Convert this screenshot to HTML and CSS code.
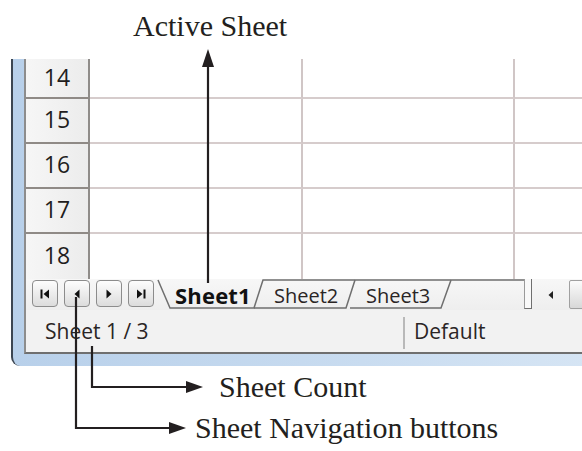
FILE: index.html
```html
<html>
<head>
    <title>Sheet tabs</title>
    <link rel="stylesheet" href="styles.css">
</head>
<body>
    <div class="title">Active Sheet</div>

    <div class="window">
        <div class="inner">
            <div class="grid">
                <div class="row first"><div class="rh">14</div><div class="c c1"></div><div class="c c2"></div><div class="c c3"></div></div>
                <div class="row"><div class="rh">15</div><div class="c c1"></div><div class="c c2"></div><div class="c c3"></div></div>
                <div class="row"><div class="rh">16</div><div class="c c1"></div><div class="c c2"></div><div class="c c3"></div></div>
                <div class="row"><div class="rh">17</div><div class="c c1"></div><div class="c c2"></div><div class="c c3"></div></div>
                <div class="row last"><div class="rh">18</div><div class="c c1"></div><div class="c c2"></div><div class="c c3"></div></div>
            </div>

            <div class="tabbar">
                <div class="nav">
                    <span class="btn"><svg width="12" height="12" viewBox="0 0 12 12"><rect x="1.5" y="1.5" width="2" height="9" fill="#111"/><path d="M10 1.5 L4.5 6 L10 10.5 Z" fill="#111"/></svg></span>
                    <span class="btn"><svg width="12" height="12" viewBox="0 0 12 12"><path d="M8.5 1.5 L3.5 6 L8.5 10.5 Z" fill="#111"/></svg></span>
                    <span class="btn"><svg width="12" height="12" viewBox="0 0 12 12"><path d="M3.5 1.5 L8.5 6 L3.5 10.5 Z" fill="#111"/></svg></span>
                    <span class="btn"><svg width="12" height="12" viewBox="0 0 12 12"><path d="M2 1.5 L7.5 6 L2 10.5 Z" fill="#111"/><rect x="8.5" y="1.5" width="2" height="9" fill="#111"/></svg></span>
                </div>
                <div class="tabs">
                    <svg class="tab-lines" width="370" height="31" viewBox="0 0 370 31">
                        <g fill="none" stroke="#6f6f6f" stroke-width="1.5">
                            <path d="M4 1 L16 29 L100 29 L109 1 L370 1"/>
                            <path d="M100 29 L192 29 L201 1"/>
                            <path d="M196 29 L287 29 L297 1"/>
                        </g>
                    </svg>
                    <span class="tab active">Sheet1</span>
                    <span class="tab t2">Sheet2</span>
                    <span class="tab t3">Sheet3</span>
                </div>
                <span class="split"></span>
                <span class="scroll-left"><svg width="8" height="10" viewBox="0 0 8 10"><path d="M6 1 L1.5 5 L6 9 Z" fill="#222"/></svg></span>
                <span class="sbtn"></span>
            </div>

            <div class="status">
                <span class="count">Sheet 1 / 3</span>
                <span class="style">Default</span>
            </div>
        </div>
    </div>

    <div class="notes">
        <div class="note count-note">Sheet Count</div>
        <div class="note nav-note">Sheet Navigation buttons</div>
    </div>

    <!-- callout arrows drawn over the screenshot -->
    <svg class="arrows" width="582" height="451" viewBox="0 0 582 451">
        <g stroke="#231f20" stroke-width="2.2" fill="none">
            <path d="M208 62 L208 283"/>
            <path d="M76 297 L76 428 L176 428"/>
            <path d="M92 346 L92 387 L193 387"/>
        </g>
        <g fill="#231f20">
            <path d="M208 49 L202 67 L214 67 Z"/>
            <path d="M186 428 L169 422 L169 434 Z"/>
            <path d="M203 387 L186 381 L186 393 Z"/>
        </g>
    </svg>
</body>
</html>
```

FILE: styles.css
```css
body { margin: 0; width: 582px; height: 451px; overflow: hidden; position: relative; background: #fff; color: #231f20; }

.title { height: 59px; box-sizing: border-box; padding: 6px 0 0 133px; font: 30px/40px "Liberation Serif", serif; }

.window { margin-left: 11px; width: 571px; border-left: 2px solid #3c4652; border-bottom-left-radius: 9px; padding: 0 0 12px 11px; background: linear-gradient(90deg, #b8d0ea, #c9dcf0 60%, #d6e5f4); }
.inner { border-left: 2px solid #8d8d8d; border-bottom: 2px solid #6f6f6f; background: #f2f2f2; font-family: "Open Sans", "DejaVu Sans", sans-serif; color: #2a2525; overflow: hidden; }

.row { display: flex; height: 45px; box-sizing: border-box; }
.row.first { height: 40px; }
.rh { width: 64px; flex: none; box-sizing: border-box; border-right: 2px solid #8f8c89; border-bottom: 2px solid #8f8a86; background: linear-gradient(90deg, #f6f6f6, #ececec); display: flex; align-items: center; justify-content: center; font-size: 23px; padding-bottom: 3px; color: #221d1d; }
.row.last .rh { border-bottom: none; }
.c { background: #fff; box-sizing: border-box; border-bottom: 2px solid #d6cccc; border-right: 2px solid #d0c6c6; }
.row.last .c { border-bottom: none; }
.c1 { width: 213px; flex: none; }
.c2 { width: 212px; flex: none; }
.c3 { flex: 1; border-right: none; }

.tabbar { display: flex; height: 31px; background: linear-gradient(#f7f7f7, #eeeeee); }
.nav { display: flex; gap: 6px; padding: 1px 0 0 6px; }
.btn { width: 26px; height: 27px; box-sizing: border-box; border: 1px solid #8c8c8c; border-radius: 4px; background: linear-gradient(#fdfdfd, #dcdcdc); display: flex; align-items: center; justify-content: center; }
.tabs { position: relative; flex: none; width: 370px; display: flex; font-size: 20px; line-height: 31px; padding-top: 1px; box-sizing: border-box; }
.tab-lines { position: absolute; left: 0; top: 0; }
.tab { position: relative; }
.tab.active { font-weight: bold; font-size: 22px; margin-left: 21px; width: 99px; color: #111; letter-spacing: 0.2px; }
.tab.t2 { width: 92px; }
.split { width: 8px; height: 30px; flex: none; box-sizing: border-box; border: 1.5px solid #6f6f6f; border-top: none; border-left-color: #9a9a9a; background: #f9f9f9; }
.scroll-left { width: 37px; flex: none; display: flex; align-items: center; justify-content: center; }
.sbtn { width: 40px; flex: none; height: 29px; margin-top: 1px; box-sizing: border-box; border: 1px solid #a0a0a0; border-radius: 2px; background: linear-gradient(#fbfbfb, #d8d8d8); }

.status { display: flex; height: 42px; font-size: 21px; background: #f2f2f2; }
.count { width: 377px; flex: none; box-sizing: border-box; padding: 7px 0 0 19px; }
.style { border-left: 2px solid #b9b9b9; margin: 7px 0 3px; padding: 0 0 0 9px; }

.notes { padding-top: 1px; font: 30px/40px "Liberation Serif", serif; }
.count-note { padding-left: 219px; }
.nav-note { padding-left: 195px; line-height: 41px; }

.arrows { position: absolute; left: 0; top: 0; pointer-events: none; }
```
